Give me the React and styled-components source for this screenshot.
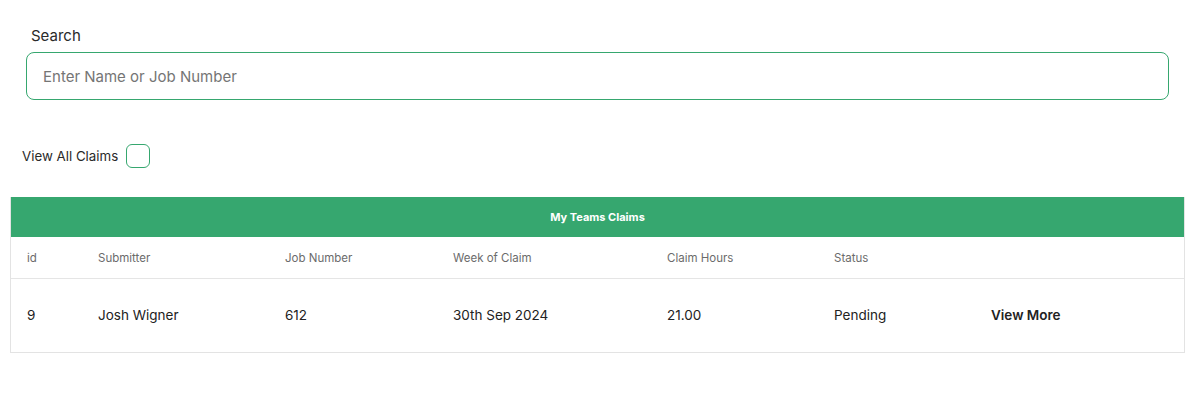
import React from 'react';
import styled, { createGlobalStyle } from 'styled-components';

const GlobalStyle = createGlobalStyle`
    body {
        margin: 0;
        background: #ffffff;
        font-family: Inter, "Open Sans", Arial, sans-serif;
        color: #212121;
    }
`

const Page = styled.div`
    padding: 26px 10px 0 10px;
    width: 1175px;
`

const SearchGroup = styled.div`
    display: flex;
    flex-direction: column;
    padding: 0 16px;

    label {
        font-size: 15px;
        color: #2a2a2a;
        margin-left: 5px;
        margin-bottom: 7px;
        line-height: 19px;
    }
`

const SearchInput = styled.input`
    height: 48px;
    box-sizing: border-box;
    width: 100%;
    border: solid 1px #36a76f;
    border-radius: 8px;
    padding: 0 16px;
    font-family: inherit;
    font-size: 15px;
    color: #333;
    background: #fff;

    ::placeholder {
        color: #6f7680;
    }
    :focus {
        outline: none;
    }
`

const CheckRow = styled.div`
    display: flex;
    align-items: center;
    gap: 8px;
    margin: 44px 0 29px 12px;
    font-size: 13.3px;
    color: #2a2a2a;
`

const CheckBox = styled.span`
    width: 22px;
    height: 22px;
    border: solid 1px #36a76f;
    border-radius: 6px;
`

const Table = styled.div`
    border: solid 1px #e3e3e3;
    border-top: none;
`

const TableTitle = styled.div`
    background: #36a76f;
    color: #fff;
    font-size: 11px;
    font-weight: 700;
    text-align: center;
    height: 40px;
    line-height: 40px;
`

const Row = styled.div`
    display: grid;
    grid-template-columns: 71px 187px 168px 214px 167px 157px 1fr;
    align-items: center;
    height: ${props => props.head ? '41px' : '71px'};
    border-bottom: ${props => props.head ? 'solid 1px #e5e5e5' : 'none'};
    font-size: ${props => props.head ? '11.5px' : '13.5px'};
    color: ${props => props.head ? '#6b6b6b' : '#222'};
    padding-bottom: ${props => props.head ? '0' : '2px'};
`

const Cell = styled.div`
    padding-left: 16px;
    font-weight: ${props => props.bold ? 600 : 400};
`

const columns = ['id', 'Submitter', 'Job Number', 'Week of Claim', 'Claim Hours', 'Status', '']

const claims = [
    { id: 9, submitter: 'Josh Wigner', job: '612', week: '30th Sep 2024', hours: '21.00', status: 'Pending' },
]

function App() {
    return (
        <>
            <GlobalStyle />
            <Page>
                <SearchGroup>
                    <label>Search</label>
                    <SearchInput placeholder="Enter Name or Job Number" />
                </SearchGroup>

                <CheckRow>
                    View All Claims
                    <CheckBox />
                </CheckRow>

                <Table>
                    <TableTitle>My Teams Claims</TableTitle>
                    <Row head>
                        {columns.map((c, i) => <Cell key={i}>{c}</Cell>)}
                    </Row>
                    {claims.map(c => (
                        <Row key={c.id}>
                            <Cell>{c.id}</Cell>
                            <Cell>{c.submitter}</Cell>
                            <Cell>{c.job}</Cell>
                            <Cell>{c.week}</Cell>
                            <Cell>{c.hours}</Cell>
                            <Cell>{c.status}</Cell>
                            <Cell bold>View More</Cell>
                        </Row>
                    ))}
                </Table>
            </Page>
        </>
    )
}

export default App;
